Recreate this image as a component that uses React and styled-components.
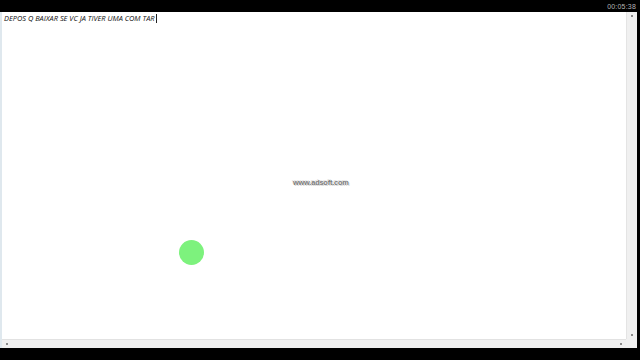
import React from "react";
import styled, { createGlobalStyle } from "styled-components";

const Global = createGlobalStyle`
  html, body { margin: 0; padding: 0; background: #000; }
  body { width: 640px; height: 360px; overflow: hidden; font-family: "Open Sans", "Liberation Sans", sans-serif; }
`;

const Screen = styled.div`
  width: 640px;
  height: 360px;
  display: flex;
  flex-direction: column;
  background: #000;
`;

const TopBar = styled.div`
  height: 12px;
  display: flex;
  justify-content: flex-end;
  align-items: center;
  padding-right: 4px;
`;

const Clock = styled.span`
  font-family: "Liberation Sans", sans-serif;
  font-size: 7px;
  color: #b4b4b4;
  letter-spacing: 0.2px;
`;

const Window = styled.div`
  width: 637px;
  height: 336px;
  background: #fff;
  display: grid;
  grid-template-columns: 1fr 11px;
  grid-template-rows: 1fr 9px;
  border-left: 2px solid #dfe8ee;
  box-sizing: border-box;
`;

const Editor = styled.div`
  position: relative;
  padding: 1px 2px;
`;

const Line = styled.div`
  font-family: "Open Sans", sans-serif;
  font-style: italic;
  font-size: 7.4px;
  line-height: 10px;
  color: #111;
  display: flex;
  align-items: center;
`;

const Caret = styled.span`
  display: inline-block;
  width: 1px;
  height: 9px;
  background: #222;
  margin-left: 1px;
`;

const Watermark = styled.div`
  position: absolute;
  left: 291px;
  top: 166px;
  font-family: "Liberation Sans", sans-serif;
  font-weight: bold;
  font-size: 7.4px;
  letter-spacing: -0.2px;
  color: #7a7a7a;
  text-shadow: 0 0 1px #fff, 1px 1px 0 #d8d8d8, -1px -1px 0 #e4e4e4;
`;

const Dot = styled.div`
  position: absolute;
  left: 177px;
  top: 228px;
  width: 25px;
  height: 25px;
  border-radius: 50%;
  background: #7df27d;
`;

const VScroll = styled.div`
  background: #f0f0f0;
  border-left: 1px solid #e4e4e4;
  display: flex;
  flex-direction: column;
  justify-content: space-between;
  align-items: center;
  padding: 3px 0;
`;

const HScroll = styled.div`
  background: #efefef;
  border-top: 1px solid #e2e2e2;
  display: flex;
  justify-content: space-between;
  align-items: center;
  padding: 0 4px;
`;

const Arrow = styled.span`
  width: 2px;
  height: 2px;
  background: #8a8a8a;
`;

const Corner = styled.div`
  background: #f0f0f0;
`;

const Bottom = styled.div`
  flex: 1;
`;

export default function App() {
  return (
    <>
      <Global />
      <Screen>
        <TopBar>
          <Clock>00:05:38</Clock>
        </TopBar>
        <Window>
          <Editor>
            <Line>
              DEPOS Q BAIXAR SE VC JA TIVER UMA COM TAR<Caret />
            </Line>
            <Watermark>www.adsoft.com</Watermark>
            <Dot />
          </Editor>
          <VScroll>
            <Arrow />
            <Arrow />
          </VScroll>
          <HScroll>
            <Arrow />
            <Arrow />
          </HScroll>
          <Corner />
        </Window>
        <Bottom />
      </Screen>
    </>
  );
}
